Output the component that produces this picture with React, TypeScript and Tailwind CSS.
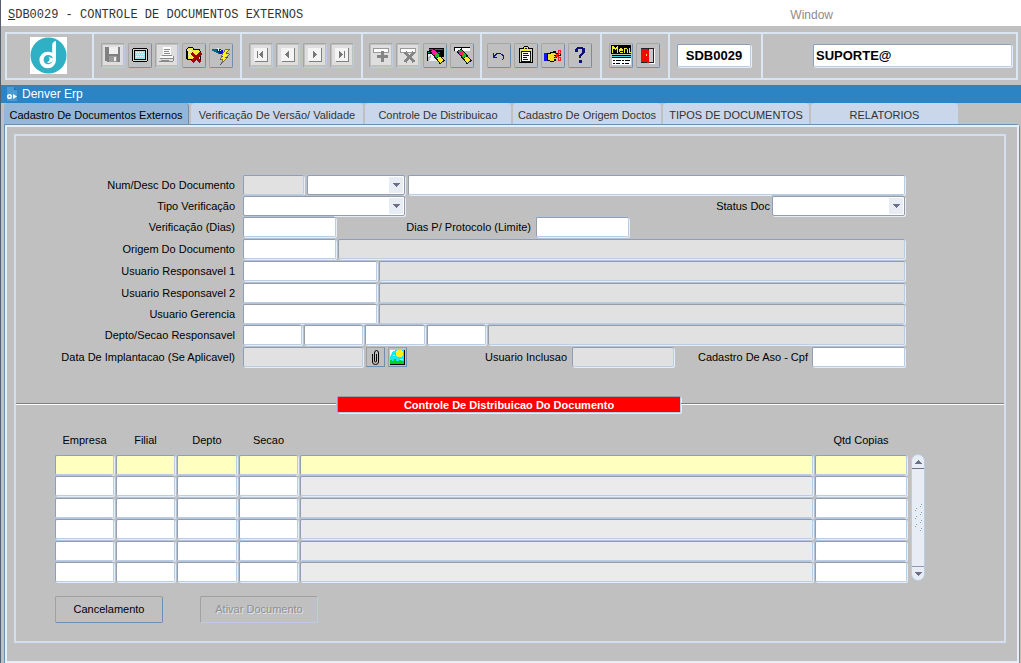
import type { ReactNode } from "react";
import clsx from "clsx";

const FIELD =
  "block min-w-0 rounded-[2px] border border-t-[#979ca6] border-l-[#979ca6] border-r-[#b9cde5] border-b-[#b9cde5] outline-none shadow-[1px_1px_0_#e6edf6,-1px_-1px_0_#b4c4d8]";

const tabs = [
  { name: "Cadastro De Documentos Externos", width: "w-[185px]" },
  { name: "Verificação De Versão/ Validade", width: "w-[172px]" },
  { name: "Controle De Distribuicao", width: "w-[146px]" },
  { name: "Cadastro De Origem Doctos", width: "w-[148px]" },
  { name: "TIPOS DE DOCUMENTOS", width: "w-[146px]" },
  { name: "RELATORIOS", width: "w-[147px]" }
];

const columns = [
  { name: "Empresa", width: "w-[61px]" },
  { name: "Filial", width: "w-[61px]" },
  { name: "Depto", width: "w-[62px]" },
  { name: "Secao", width: "w-[61px]" },
  { name: "", width: "" },
  { name: "Qtd Copias", width: "w-[94px]" }
];

function Field({
  id,
  label,
  className,
  readOnly
}: {
  id?: string;
  label?: string;
  className: string;
  readOnly?: boolean;
}) {
  return (
    <input
      id={id}
      aria-label={label}
      type="text"
      readOnly={readOnly}
      className={clsx(FIELD, "h-5 px-1", readOnly ? "bg-[#e1e1e1]" : "bg-white", className)}
    />
  );
}

function Combo({ id, label, className }: { id?: string; label?: string; className: string }) {
  return (
    <div
      className={clsx(
        "flex h-5 rounded-[2px] border border-[#979ca6] bg-white p-px shadow-[1px_1px_0_#e6edf6,-1px_-1px_0_#b4c4d8]",
        className
      )}
    >
      <select id={id} aria-label={label} className="min-w-0 flex-1 appearance-none outline-none">
        <option value=""></option>
      </select>
      <span className="pointer-events-none flex w-3.5 items-center justify-center bg-[#e8edf5]">
        <svg width="7" height="4" viewBox="0 0 7 4" shapeRendering="crispEdges">
          <path d="M0 0h7v1H6v1H5v1H4v1H3V3H2V2H1V1H0z" fill="#6c7088" />
        </svg>
      </span>
    </div>
  );
}

function Label({ id, children, className }: { id: string; children: ReactNode; className?: string }) {
  return (
    <label htmlFor={id} className={clsx("shrink-0 text-right leading-5 whitespace-nowrap", className)}>
      {children}
    </label>
  );
}

function Row({ id, label, children }: { id: string; label: string; children: ReactNode }) {
  return (
    <div className="flex items-start">
      <Label id={id} className="mr-2 w-[219px]">
        {label}
      </Label>
      {children}
    </div>
  );
}

function ToolButton({ name, disabled, children }: { name: string; disabled?: boolean; children: ReactNode }) {
  return (
    <button
      type="button"
      aria-label={name}
      disabled={disabled}
      className={clsx(
        "flex h-[25px] w-6 items-center justify-center rounded-[2px] border border-t-[#a6a6a6] border-l-[#a6a6a6]",
        disabled ? "border-r-[#b9cde5] border-b-[#b9cde5]" : "border-r-[#6f8fb0] border-b-[#6f8fb0]"
      )}
    >
      <svg width="20" height="20" viewBox="0 0 20 20" shapeRendering="crispEdges">
        {disabled && <path d="M0 0h20v20H0z" fill="#dedede" />}
        {children}
      </svg>
    </button>
  );
}

function Group({ className, children }: { className: string; children: ReactNode }) {
  return (
    <div
      className={clsx(
        "flex shrink-0 items-center gap-[3px] border-r-2 border-[#dbe6f3] pb-0.5",
        className
      )}
    >
      {children}
    </div>
  );
}

function NavButton({ name, d }: { name: string; d: string }) {
  return (
    <ToolButton name={name} disabled>
      <path d="M4 3h13v14H4z" fill="#808080" />
      <path d="M3 3h13v13H3z" fill="#f4f4f4" />
      <path d={d} fill="#777" />
    </ToolButton>
  );
}

function Wand() {
  return (
    <g fill="none">
      <path d="M7 5l10.500 12.500" stroke="#111" strokeWidth="6" />
      <path d="M7.500 5.500l3 3.500" stroke="#f01c9c" strokeWidth="4" />
      <path d="M9.500 8l1.500 1.500" stroke="#ff3030" strokeWidth="3" />
      <path d="M11 9.500l2 2.500" stroke="#10c030" strokeWidth="4" />
      <path d="M13.500 12.500l3.500 4.200" stroke="#fff02a" strokeWidth="4" />
      <path d="M8 5h1v1H8zM11 8h1v1h-1z" fill="#10c030" />
    </g>
  );
}

function Toolbar() {
  return (
    <header className="bg-[#c0c0c0] pt-1.5 pr-[3px] pb-[5px] pl-1">
      <div className="flex h-[48px] border-2 border-[#dbe6f3]">
        <Group className="w-[87px] justify-center pr-0.5">
          <svg width="37" height="37" viewBox="0 0 37 37" role="img" aria-label="Denver">
            <path d="M0 0h37v37H0z" fill="#fff" />
            <circle cx="18.500" cy="18.500" r="18" fill="#2fb0c4" />
            <path
              d="M26 4v19a8.300 8.300 0 1 1-8-8.300c1.600 0 3 .3 4.200 1V8.500C22.200 6 23.500 4.500 26 4z"
              fill="#fff"
            />
            <path d="M22.500 20c-1-1.300-2.500-2-4.300-2-2.600 0-4.600 2-4.600 4.700 0 2.500 2 4.500 4.600 4.500 2.500 0 4.300-1.800 4.300-4.400z" fill="#2fb0c4" />
            <path d="M18 19.500c2 .8 2.500 4-1 6.200 3.500.8 6-1.200 6-4.200z" fill="#fff" />
          </svg>
        </Group>

        <Group className="w-[148px] pl-[7px]">
          <ToolButton name="Salvar" disabled>
            <path d="M2 2h15v15H4v-1H2z" fill="#808080" />
            <path d="M6 2h9v7H6z" fill="#efefef" />
            <path d="M6 11h8v6H6z" fill="#9b9b9b" />
            <path d="M11 12h2v4h-2z" fill="#eee" />
          </ToolButton>
          <ToolButton name="Tela">
            <path d="M3 3h14v1h1v12h-1v1H3v-1H2V4h1z" fill="#000" />
            <path d="M3 4h14v12H3z" fill="#d5d5c8" />
            <path d="M4 5h12v10H4z" fill="#000" />
            <path d="M5 6h10v8H5z" fill="#8ee8f0" />
            <path d="M6 7h1v1H6zM8 7h1v1H8zM10 7h1v1h-1zM12 7h1v1h-1zM7 9h1v1H7zM9 9h1v1H9zM11 9h1v1h-1zM13 9h1v1h-1zM6 11h1v1H6zM8 11h1v1H8zM10 11h1v1h-1zM12 11h1v1h-1z" fill="#fff" />
          </ToolButton>
          <ToolButton name="Imprimir" disabled>
            <path d="M6 2h8v9H6z" fill="#fff" />
            <path d="M7 4h6v1H7zM7 6h5v1H7zM7 8h6v1H7z" fill="#888" />
            <path d="M3 11h14v3H3z" fill="#f8f8f8" />
            <path d="M3 13h14v1H3zM16 11h1v5h-1zM2 16h14v1H2zM4 15h8v1H4zM5 10h10v1H5z" fill="#8a8a8a" />
          </ToolButton>
          <ToolButton name="Sair">
            <path d="M3 3h1V2h5v1h1v1h6v2h1v9H3v-1H2V4h1z" fill="#000" />
            <path d="M4 3h5v2h6v1h1v8H4V6H3V4h1z" fill="#f2ed3d" />
            <path d="M4 5h1v1H4zM6 5h1v1H6zM5 7h1v1H5zM7 7h1v1H7zM4 9h1v1H4zM6 9h1v1H6zM5 11h1v1H5z" fill="#fffcc0" />
            <path d="M7.500 8l9 9M17 8l-9 9" fill="none" stroke="#a00000" strokeWidth="3" />
          </ToolButton>
          <ToolButton name="Executar">
            <path d="M1 4h5v1h3v4H7V8H5V7H3V6H1z" fill="#006a80" />
            <path d="M6 4h4v1h2v3h-1v1H8V7H6z" fill="#1010e0" />
            <path d="M6 3h2v1H6zM7 4h1v2H7zM9 5h1v1H9z" fill="#d8ffff" />
            <path
              d="M15 4h4l-4 4.500h3L14 12.500h3L9 19.500l2.500-5H9l3-3.500h-2z"
              fill="#fff02a"
              stroke="#444"
              strokeWidth=".7"
            />
          </ToolButton>
        </Group>

        <Group className="w-[121px] pl-[7px]">
          <NavButton name="Primeiro registro" d="M6 6h1v7H6zM12 6v7h-1v-1h-1v-1H9v-1H8V9h1V8h1V7h1V6z" />
          <NavButton name="Registro anterior" d="M11 6v7h-1v-1H9v-1H8v-1H7V9h1V8h1V7h1V6z" />
          <NavButton name="Proximo registro" d="M8 6v7h1v-1h1v-1h1v-1h1V9h-1V8h-1V7H9V6z" />
          <NavButton name="Ultimo registro" d="M12 6h1v7h-1zM7 6v7h1v-1h1v-1h1v-1h1V9h-1V8H9V7H8V6z" />
        </Group>

        <Group className="w-[119px] pl-[6px]">
          <ToolButton name="Inserir" disabled>
            <path d="M2 3h16v5H2z" fill="#999" />
            <path d="M3 4h14v3H3z" fill="#fff" />
            <path d="M10 6h3v4h4v3h-4v4h-3v-4H6v-3h4z" fill="#858585" />
          </ToolButton>
          <ToolButton name="Remover" disabled>
            <path d="M2 3h16v5H2z" fill="#999" />
            <path d="M3 4h14v3H3z" fill="#fff" />
            <path d="M7 7l9 10M16 7l-9 10" fill="none" stroke="#858585" strokeWidth="3" />
          </ToolButton>
          <ToolButton name="Consultar">
            <path d="M4 3h15v9H4z" fill="#000" />
            <path d="M4 4h14v1H4z" fill="#0b8080" />
            <path d="M2 6h14v10H2z" fill="#000" />
            <path d="M3 7h12v1H3z" fill="#0b8080" />
            <path d="M3 9h12v7H3z" fill="#eee" />
            <path d="M3 12h1v-1h1v-1h1v3H5v2H4v1H3z" fill="#bbb" />
            <Wand />
          </ToolButton>
          <ToolButton name="Limpar">
            <path d="M2 2h16v4H2z" fill="#000" />
            <path d="M3 3h15v3H3z" fill="#fff" />
            <Wand />
          </ToolButton>
        </Group>

        <Group className="w-[120px] pl-[5px]">
          <ToolButton name="Desfazer">
            <path d="M4 8h1v2h1V9h1V8h5v1h2v1h1v4h-1v1h-1v-1h1v-3h-1v-1h-1V9H8v1H7v1H6v1h2v1H4z" fill="#15157c" />
          </ToolButton>
          <ToolButton name="Colar">
            <path d="M8 1h4v1h1v1h4v15H3V3h4V2h1z" fill="#000" />
            <path d="M4 4h12v13H4z" fill="#d5d5b8" />
            <path d="M6 5h8v11H6z" fill="#fff" />
            <path d="M8 2h4v2h2v2H6V4h2z" fill="#f4ea28" />
            <path d="M6 6h8v1H6zM7 8h5v1H7zM7 10h6v1H7zM7 12h4v1H7zM7 14h5v1H7zM9 3h2v1H9zM5 6h1v10H5zM14 6h1v11H5v-1h9z" fill="#111" />
          </ToolButton>
          <ToolButton name="Recortar">
            <path d="M1 8h3v8H1z" fill="#1515f0" />
            <path d="M4 8h3V7h3V6h3v2h5v3h-4v2h-1v3h-2v1H7v-1H4z" fill="#000" />
            <path d="M5 9h3V8h4v1h5v1h-6v1h2v1h-2v1h2v1h-2v2H7v-1H5z" fill="#f1e12c" />
            <g fill="none" stroke="#f02020">
              <path d="M15.500 5.500h2v3h-2zM15.500 12.500h2v3h-2z" />
              <path d="M12 8l4 4.500M12 12.500l4-4" />
            </g>
          </ToolButton>
          <ToolButton name="Ajuda">
            <path d="M7 2h6v1h2v5h-1v1h-1v1h-1v1h-1v2H9v-3h1V9h1V8h1V4H8v3H5V4h1V3h1zM9 15h3v3H9z" fill="#10107c" />
          </ToolButton>
        </Group>

        <Group className="w-[68px] pl-[7px]">
          <ToolButton name="Menu">
            <path d="M1 10h19v10H1z" fill="#fff" />
            <path d="M1 10h19v1H1z" fill="#000" />
            <path d="M1 11h19v1H1z" fill="#35dce8" />
            <path d="M1 12h19v1H1zM2 15h2v1H2zM5 15h5v1H5zM11 15h2v1h-2zM14 15h5v1h-5zM2 18h2v1H2zM5 18h4v1H5zM11 18h2v1h-2zM14 18h4v1h-4z" fill="#000" />
            <path d="M0 0h20v9H0z" fill="#000" />
            <path d="M1 1h2v1h1v1h1V2h1V1h1v7H6V4H5v1H4V4H2v4H1zM8 4h1V3h2v1h1v2H9v1h3v1H9V7H8zM13 3h3v1h1v4h-1V4h-2v4h-1zM18 3h1v4h1v1h-2z" fill="#f6ed2a" />
          </ToolButton>
          <ToolButton name="Fechar">
            <path d="M3 3h13v15H3z" fill="#222" />
            <path d="M11 4h4v13h-4z" fill="#c8c8c8" />
            <path d="M3 4h7v1h1v13H9v-1H3z" fill="#f00808" />
            <path d="M8 9h1v2H8z" fill="#fff02a" />
            <path d="M16 4h1v15h-1zM11 18h5v1h-5z" fill="#fff" />
          </ToolButton>
        </Group>

        <Group className="w-[93px] pl-[7px]">
          <input
            aria-label="Programa"
            defaultValue="SDB0029"
            className={clsx(FIELD, "h-[23px] w-[74px] bg-white text-center text-[13px] font-bold")}
          />
        </Group>

        <div className="flex min-w-0 flex-1 items-center pr-1 pb-0.5 pl-[50px]">
          <input
            aria-label="Usuario"
            defaultValue="SUPORTE@"
            className={clsx(FIELD, "h-[23px] flex-1 bg-white px-0.5 text-[13px] font-bold")}
          />
        </div>
      </div>
    </header>
  );
}

function DocumentForm() {
  return (
    <form className="grid grid-rows-[21px_21px_22px_22px_22px_21px_21px_22px_22px] pt-[39px] pr-[99px]">
      <Row id="num" label="Num/Desc Do Documento">
        <Field id="num" readOnly className="w-[61px]" />
        <Combo label="Tipo do documento" className="ml-[3px] w-[98px]" />
        <Field label="Descrição do documento" className="ml-[3px] flex-1" />
      </Row>
      <Row id="tipo" label="Tipo Verificação">
        <Combo id="tipo" className="w-[162px]" />
        <Label id="status" className="mr-0.5 ml-auto">
          Status Doc
        </Label>
        <Combo id="status" className="w-[133px]" />
      </Row>
      <Row id="dias" label="Verificação (Dias)">
        <Field id="dias" className="w-[93px]" />
        <Label id="limite" className="mr-[5px] w-[195px]">
          Dias P/ Protocolo (Limite)
        </Label>
        <Field id="limite" className="w-[93px]" />
      </Row>
      <Row id="origem" label="Origem Do Documento">
        <Field id="origem" className="w-[93px]" />
        <Field label="Descrição da origem" readOnly className="ml-0.5 flex-1" />
      </Row>
      <Row id="resp1" label="Usuario Responsavel 1">
        <Field id="resp1" className="w-[134px]" />
        <Field label="Nome do responsavel 1" readOnly className="ml-0.5 flex-1" />
      </Row>
      <Row id="resp2" label="Usuario Responsavel 2">
        <Field id="resp2" className="w-[134px]" />
        <Field label="Nome do responsavel 2" readOnly className="ml-0.5 flex-1" />
      </Row>
      <Row id="gerencia" label="Usuario Gerencia">
        <Field id="gerencia" className="w-[134px]" />
        <Field label="Nome da gerencia" readOnly className="ml-0.5 flex-1" />
      </Row>
      <Row id="depto" label="Depto/Secao Responsavel">
        <Field id="depto" className="w-[59px]" />
        <Field label="Filial responsavel" className="ml-0.5 w-[59px]" />
        <Field label="Depto responsavel" className="ml-0.5 w-[60px]" />
        <Field label="Secao responsavel" className="ml-0.5 w-[59px]" />
        <Field label="Nome da secao" readOnly className="ml-0.5 flex-1" />
      </Row>
      <Row id="data" label="Data De Implantacao (Se Aplicavel)">
        <Field id="data" readOnly className="w-[120px]" />
        <button
          type="button"
          aria-label="Anexo"
          className="ml-[3px] flex h-5 w-[19px] items-center justify-center border border-t-[#a0a0a0] border-l-[#a0a0a0] border-r-[#6f8fb0] border-b-[#6f8fb0]"
        >
          <svg width="8" height="15" viewBox="0 0 8 15" fill="none" stroke="#000">
            <path d="M.5 4v8q0 2.500 3 2.500t3-2.500V3q0-2.500-2-2.500t-2 2.500v8q0 1 1 1t1-1V4" />
          </svg>
        </button>
        <button
          type="button"
          aria-label="Imagem"
          className="ml-[3px] flex h-5 w-[19px] items-center justify-center border border-t-[#a0a0a0] border-l-[#a0a0a0] border-r-[#6f8fb0] border-b-[#6f8fb0]"
        >
          <svg width="15" height="15" viewBox="0 0 15 15" shapeRendering="crispEdges">
            <path d="M0 0h15v15H0z" fill="#000" />
            <path d="M0 0h14v14H0z" fill="#15e8f2" />
            <path d="M0 0h5v1H3v1H2v2H1v2H0zM3 5h2v1H3zM10 9h3v1h-3z" fill="#fff" />
            <path d="M6 1h1V0h5v1h1v5h-1v1H7V6H6z" fill="#fff21a" />
            <path d="M0 10h2v1h2V9h2v2h3v-1h2v1h3v3H0z" fill="#08d018" />
          </svg>
        </button>
        <Label id="inclusao" className="mr-[5px] w-[160px]">
          Usuario Inclusao
        </Label>
        <Field id="inclusao" readOnly className="w-[102px]" />
        <Label id="cpf" className="mr-1 ml-auto">
          Cadastro De Aso - Cpf
        </Label>
        <Field id="cpf" className="w-[93px]" />
      </Row>
    </form>
  );
}

function SectionTitle() {
  return (
    <div className="mt-[27px] flex items-start">
      <div className="mt-[7px] h-0.5 w-[321px] border-t border-b border-t-[#808080] border-b-white" />
      <h2 className="h-[17px] w-[344px] rounded-[2px] border border-t-[#979ca6] border-l-[#979ca6] border-r-[#b9cde5] border-b-[#b9cde5] bg-[#ff0000] text-center text-[11px] leading-4 font-bold text-white shadow-[1px_1px_0_#e6edf6,-1px_-1px_0_#b4c4d8]">
        Controle De Distribuicao Do Documento
      </h2>
      <div className="mt-[7px] h-0.5 flex-1 border-t border-b border-t-[#808080] border-b-white" />
    </div>
  );
}

function Scrollbar() {
  return (
    <div className="mt-[25px] ml-0.5 flex h-[127px] w-3.5 flex-col rounded-full border border-[#b9cde5] bg-[#e8edf5]">
      <button
        type="button"
        aria-label="Rolar para cima"
        className="flex h-3.5 items-center justify-center border-b border-[#6c7088]"
      >
        <svg width="7" height="4" viewBox="0 0 7 4" shapeRendering="crispEdges">
          <path d="M3 0h1v1h1v1h1v1h1v1H0V3h1V2h1V1h1z" fill="#6c7088" />
        </svg>
      </button>
      <div className="flex flex-1 items-center justify-center">
        <svg width="8" height="28" viewBox="0 0 8 28" shapeRendering="crispEdges">
          <path d="M6 1h1v1H6zM1 5h1v1H1zM6 9h1v1H6zM1 13h1v1H1zM6 17h1v1H6zM1 21h1v1H1zM6 25h1v1H6z" fill="#fff" />
          <path d="M7 0h1v1H7zM6 2h1v1H6zM2 4h1v1H2zM1 6h1v1H1zM7 8h1v1H7zM6 10h1v1H6zM2 12h1v1H2zM1 14h1v1H1zM7 16h1v1H7zM6 18h1v1H6zM2 20h1v1H2zM1 22h1v1H1zM7 24h1v1H7zM6 26h1v1H6z" fill="#7f9dbd" />
        </svg>
      </div>
      <button
        type="button"
        aria-label="Rolar para baixo"
        className="flex h-3.5 items-center justify-center border-t border-[#8f9bb3]"
      >
        <svg width="7" height="4" viewBox="0 0 7 4" shapeRendering="crispEdges">
          <path d="M0 0h7v1H6v1H5v1H4v1H3V3H2V2H1V1H0z" fill="#6c7088" />
        </svg>
      </button>
    </div>
  );
}

function DistributionTable() {
  return (
    <div className="mt-4 flex items-start pr-[79px] pl-[39px]">
      <table className="min-w-0 flex-1 table-fixed border-collapse">
        <thead>
          <tr className="h-[26px] align-top leading-[22px]">
            {columns.map((c) => (
              <th key={c.name} className={clsx("p-0 pr-0.5 font-normal", c.width)}>
                {c.name}
              </th>
            ))}
          </tr>
        </thead>
        <tbody>
          {[0, 1, 2, 3, 4, 5].map((row) => (
            <tr key={row} className="h-[21px] align-top even:h-[22px]">
              {columns.map((c, i) => (
                <td key={c.name} className="p-0 pr-0.5">
                  <input
                    aria-label={`${c.name || "Descrição"} ${row + 1}`}
                    readOnly={i === 4}
                    className={clsx(
                      FIELD,
                      "h-5 w-full px-1",
                      row === 0 ? "bg-[#ffffc0]" : i === 4 ? "bg-[#ebebeb]" : "bg-white"
                    )}
                  />
                </td>
              ))}
            </tr>
          ))}
        </tbody>
      </table>
      <Scrollbar />
    </div>
  );
}

export default function App() {
  return (
    <div className="flex min-h-screen flex-col border-l border-[#55606f] bg-[#c0c0c0] font-['Liberation_Sans',Arial,sans-serif] text-[11px] text-black">
      <div className="flex h-[26px] items-center bg-white pl-[7px]">
        <h1 className="flex-1 pt-1 font-['Liberation_Mono',monospace] text-[12px] whitespace-pre text-[#333]">
          <span className="underline">S</span>DB0029 - CONTROLE DE DOCUMENTOS EXTERNOS
        </h1>
        <button type="button" className="mr-[188px] pt-1 text-[12px] text-[#8c8c8c]">
          Window
        </button>
      </div>

      <Toolbar />

      <div className="flex h-[18px] items-center gap-1 bg-[#2c84c4] pl-[5px] text-[12px] text-white">
        <svg width="12" height="14" viewBox="0 0 12 14">
          <path d="M1 0h7l3 3v11H1z" fill="#4a9ad4" />
          <path d="M8 0v3h3" fill="#1d6fae" />
          <circle cx="3.500" cy="9.500" r="1.800" fill="none" stroke="#fff" strokeWidth="1.500" />
          <path d="M7 7l4 2.500L7 12z" fill="#fff" />
        </svg>
        Denver Erp
      </div>

      <div role="tablist" className="flex h-[21px] gap-0.5 pl-[3px]">
        {tabs.map((t, i) => (
          <button
            key={t.name}
            type="button"
            role="tab"
            aria-selected={i === 0}
            className={clsx(
              "shrink-0 rounded-t-[4px] pt-1 whitespace-nowrap",
              t.width,
              i === 0 ? "border-r border-[#6f8fb0] bg-[#94b7d9]" : "bg-[#cad7ea] text-[#333]"
            )}
          >
            {t.name}
          </button>
        ))}
      </div>

      <main className="mr-px ml-[3px] flex flex-1 flex-col rounded-tr-[4px] border border-b-0 border-[#6f8fb0]">
        <div className="flex-1 border-2 border-[#e8eef6] px-[7px] pt-[7px] pb-[17px]">
          <div className="mr-1 border-2 border-[#d3dfee] pb-[18px]">
            <DocumentForm />
            <SectionTitle />
            <DistributionTable />
            <div className="mt-3 flex gap-[37px] pl-[39px]">
              <button
                type="button"
                className="h-[27px] w-[108px] rounded-[2px] border border-t-[#a0a0a0] border-l-[#a0a0a0] border-r-[#6f8fb0] border-b-[#6f8fb0]"
              >
                Cancelamento
              </button>
              <button
                type="button"
                disabled
                className="h-[27px] w-[118px] rounded-[2px] border border-t-[#a0a0a0] border-l-[#a0a0a0] border-r-[#b9cde5] border-b-[#b9cde5] text-[#8f8f8f] [text-shadow:1px_1px_0_#dfe6ee]"
              >
                Ativar Documento
              </button>
            </div>
          </div>
        </div>
      </main>
    </div>
  );
}
